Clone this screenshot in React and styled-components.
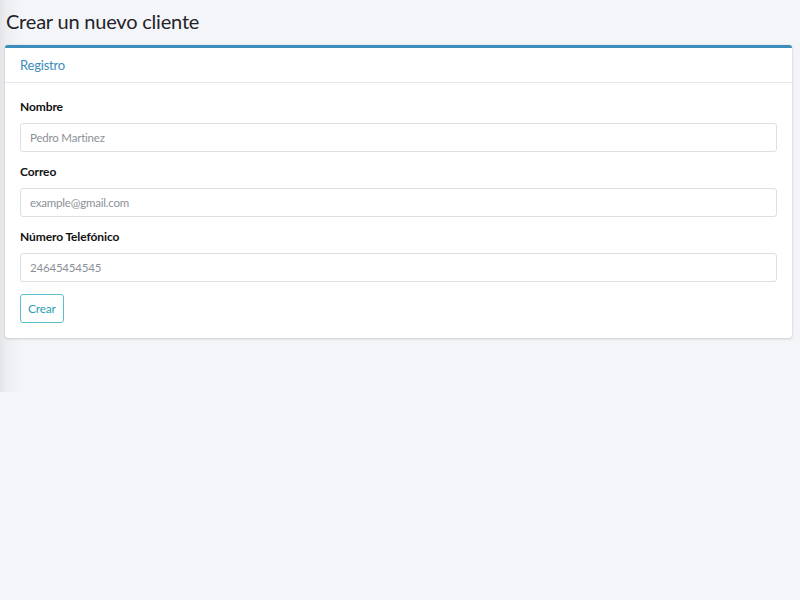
import React from "react";
import styled, { createGlobalStyle } from "styled-components";

const GlobalStyle = createGlobalStyle`
  html, body {
    margin: 0;
    padding: 0;
    background: #f4f5f9;
    font-family: Lato, "Liberation Sans", sans-serif;
    color: #212529;
  }
  * { box-sizing: border-box; }
`;

const Wrapper = styled.div`
  min-height: 392px;
  padding: 7px 8px 0 5px;
  background: linear-gradient(to right, #e4e5e8 0px, #eceef1 6px, #f4f5f9 20px);
`;

const PageTitle = styled.h1`
  margin: 0 0 10px 1px;
  font-size: 20px;
  font-weight: 400;
  line-height: 28px;
  letter-spacing: -0.2px;
  color: #1f2329;
`;

const Card = styled.div`
  background: #fff;
  border-top: 3px solid #3c8dbc;
  border-radius: 3px;
  box-shadow: 0 0 1px rgba(0, 0, 0, 0.2), 0 1px 3px rgba(0, 0, 0, 0.15);
`;

const CardHeader = styled.div`
  height: 35px;
  padding: 0 15px;
  display: flex;
  align-items: center;
  border-bottom: 1px solid #e6e7ea;
  color: #3c8dbc;
  font-size: 13px;
  letter-spacing: -0.2px;
`;

const CardBody = styled.div`
  padding: 16px 15px 15px;
`;

const Group = styled.div`
  margin-bottom: 12px;
`;

const Label = styled.label`
  display: block;
  margin-bottom: 8px;
  font-size: 12px;
  font-weight: 700;
  line-height: 16px;
  letter-spacing: -0.1px;
  color: #111;
`;

const Input = styled.input`
  display: block;
  width: 100%;
  height: 29px;
  padding: 0 9px;
  border: 1px solid #dcdfe3;
  border-radius: 3px;
  font-family: inherit;
  font-size: 11.5px;
  letter-spacing: -0.2px;
  color: #495057;
  background: #fff;
  outline: none;
  &::placeholder { color: #8c9197; }
`;

const Button = styled.button`
  height: 29px;
  padding: 0 7px;
  border: 1px solid #5bc0ce;
  border-radius: 3px;
  background: #fff;
  color: #2a9fb3;
  font-family: inherit;
  font-size: 12px;
  letter-spacing: -0.2px;
  cursor: pointer;
`;

const fields = [
  { label: "Nombre", placeholder: "Pedro Martinez" },
  { label: "Correo", placeholder: "example@gmail.com" },
  { label: "Número Telefónico", placeholder: "24645454545" },
];

export default function App() {
  return (
    <>
      <GlobalStyle />
      <Wrapper>
        <PageTitle>Crear un nuevo cliente</PageTitle>
        <Card>
          <CardHeader>Registro</CardHeader>
          <CardBody>
            {fields.map((f) => (
              <Group key={f.label}>
                <Label>{f.label}</Label>
                <Input placeholder={f.placeholder} />
              </Group>
            ))}
            <Button>Crear</Button>
          </CardBody>
        </Card>
      </Wrapper>
    </>
  );
}
